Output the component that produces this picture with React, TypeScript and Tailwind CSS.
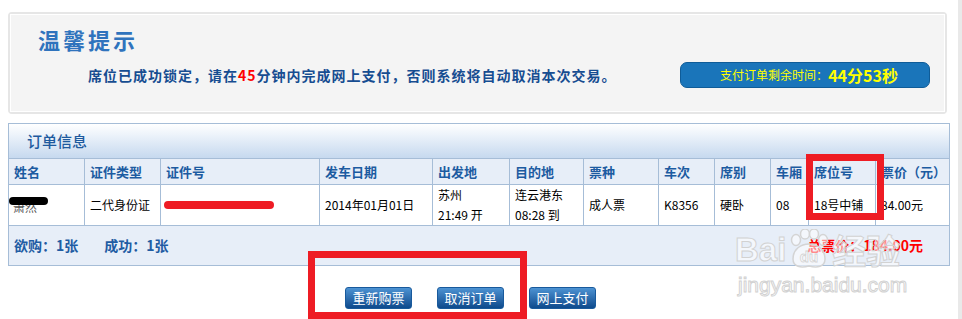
import React from "react";

const cols = [
  "姓名",
  "证件类型",
  "证件号",
  "发车日期",
  "出发地",
  "目的地",
  "票种",
  "车次",
  "席别",
  "车厢",
  "席位号",
  "票价（元）",
];

function Paw() {
  return (
    <svg width="44" height="40" viewBox="0 0 44 40" className="mx-[1px]">
      <g fill="rgba(255,255,255,0.55)" stroke="#d4d4d4" strokeWidth="1.5">
        <ellipse cx="9" cy="11" rx="4.5" ry="5.5" />
        <ellipse cx="18" cy="5" rx="4.5" ry="5" />
        <ellipse cx="27" cy="5" rx="4.5" ry="5" />
        <ellipse cx="36" cy="11" rx="4.5" ry="5.5" />
        <path d="M6 30 C6 20 14 15 22 15 C30 15 38 20 38 30 C38 38 30 39 22 37 C14 39 6 38 6 30 Z" />
      </g>
      <text
        x="22"
        y="33"
        textAnchor="middle"
        fontSize="15"
        fontFamily="Liberation Sans, Arial, sans-serif"
        fontWeight="700"
        fill="rgba(255,255,255,0.6)"
        stroke="#d4d4d4"
        strokeWidth="0.8"
      >
        du
      </text>
    </svg>
  );
}

export default function App() {
  const cjk = "font-['SimSun','Noto_Sans_CJK_SC',sans-serif]";
  return (
    <div className={`relative flex w-[962px] h-[319px] bg-white overflow-hidden ${cjk}`}>
      <div className="w-[958px] flex flex-col">
        {/* warm tips box */}
        <div className="mt-[12px] ml-[8px] w-[939px] h-[102px] border-2 border-[#e6e6e6] rounded-[4px]">
          <div className="h-full border border-white bg-[#f4f4f4] flex flex-col">
            <div className="pt-[11px] pl-[27px] h-[37px] text-[22px] leading-[26px] font-bold tracking-[3px] text-[#2f73bd]">
              温馨提示
            </div>
            <div className="mt-[10px] flex items-center justify-between pr-[14px]">
              <div className="pl-[77px] text-[14px] font-bold tracking-[1px] text-[#174d91] leading-[20px]">
                席位已成功锁定，请在<span className="text-[#ff0000]">45</span>
                分钟内完成网上支付，否则系统将自动取消本次交易。
              </div>
              <div className="w-[250px] h-[26px] rounded-[7px] bg-[#1a75ba] border border-[#0f5c98] flex items-center justify-center pl-[8px] text-[#ffff00]">
                <span className="text-[12px]">支付订单剩余时间：</span>
                <span className="text-[16px] font-bold">44分53秒</span>
              </div>
            </div>
          </div>
        </div>

        {/* order info */}
        <div className="mt-[9px] ml-[8px] w-[942px] border-l border-[#a6bdd7]">
          <div className="h-[36px] border-t border-b border-r border-[#a6bdd7] bg-gradient-to-b from-[#ffffff] to-[#c6d9ef] flex items-center pl-[18px] text-[15px] font-medium text-[#1d5a9e]">
            订单信息
          </div>
          <div className="grid grid-cols-[76px_76px_159px_113px_77px_74px_75px_56px_56px_38px_67px_74px]">
            {cols.map((c) => (
              <div
                key={c}
                className="h-[26px] border-r border-b border-[#a6bdd7] bg-[#e7eef8] flex items-center pl-[5px] text-[13px] font-bold text-[#1c5ba1] whitespace-nowrap overflow-hidden"
              >
                {c}
              </div>
            ))}
            {[
              <div key="n" className="relative -ml-[1px] mt-[4px]">
                <span className="text-[#555]">萧然</span>
                <div className="absolute left-[-4px] top-[-1px] w-[39px] h-[8px] rounded-full bg-black" />
              </div>,
              "二代身份证",
              <div key="id" className="w-[110px] h-[8px] rounded-full bg-[#ee1c24] -ml-[2px] -mt-[1px]" />,
              "2014年01月01日",
              <div key="f" className="leading-[20px]">
                <div>苏州</div>
                <div>21:49 开</div>
              </div>,
              <div key="t" className="leading-[20px]">
                <div>连云港东</div>
                <div>08:28 到</div>
              </div>,
              "成人票",
              "K8356",
              "硬卧",
              "08",
              "18号中铺",
              "84.00元",
            ].map((v, i) => (
              <div
                key={i}
                className="h-[41px] border-r border-b border-[#a6bdd7] bg-white flex items-center pl-[5px] text-[12px] text-black whitespace-nowrap"
              >
                {v}
              </div>
            ))}
          </div>
          <div className="h-[40px] border-r border-b border-[#a6bdd7] bg-[#e7eef8] flex items-center justify-between pl-[5px] pr-[26px] text-[14px] font-bold">
            <div className="text-[#1f5ca3] flex gap-[26px]">
              <span>欲购：1张</span>
              <span>成功：1张</span>
            </div>
            <span className="text-[#ff0000]">总票价：184.00元</span>
          </div>
        </div>

        {/* buttons */}
        <div className="mt-[21px] pl-[345px] flex gap-[25px]">
          {["重新购票", "取消订单", "网上支付"].map((b) => (
            <div
              key={b}
              className="w-[67px] h-[22px] rounded-[3px] border border-[#195a9c] bg-gradient-to-b from-[#4d93d3] to-[#0d4a8c] text-white text-[13px] flex items-center justify-center"
            >
              {b}
            </div>
          ))}
        </div>
      </div>
      <div className="w-[4px] h-full bg-[#e9e9e9]" />

      {/* watermark */}
      <div className="absolute left-[735px] top-[229px] flex items-end pointer-events-none">
        <span className="text-[33px] leading-[38px] font-bold font-['Liberation_Sans',sans-serif] text-white/55 [-webkit-text-stroke:1px_#d2d2d2]">
          Bai
        </span>
        <Paw />
        <span className="text-[34px] leading-[38px] font-bold text-white/55 [-webkit-text-stroke:1px_#d2d2d2] font-['Noto_Sans_CJK_SC',sans-serif]">
          经验
        </span>
      </div>
      <div className="absolute left-[738px] top-[273px] text-[21px] leading-[24px] font-['Liberation_Sans',sans-serif] text-white/55 [-webkit-text-stroke:1px_#d2d2d2] pointer-events-none">
        jingyan.baidu.com
      </div>

      {/* red annotation boxes */}
      <div className="absolute left-[806px] top-[154px] w-[78px] h-[66px] border-[7px] border-[#ee1c24]" />
      <div className="absolute left-[308px] top-[251px] w-[219px] h-[68px] border-[7px] border-[#ee1c24]" />
    </div>
  );
}
